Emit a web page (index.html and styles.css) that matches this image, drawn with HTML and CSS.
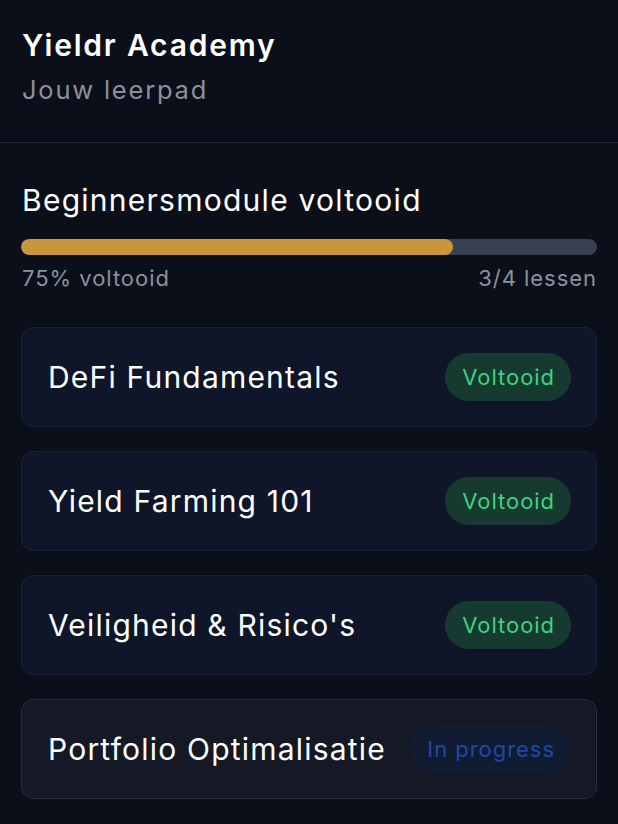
FILE: index.html
```html
<!DOCTYPE html>
<html lang="nl">
<head>
<meta charset="utf-8">
<title>Yieldr Academy</title>
<link rel="stylesheet" href="styles.css">
</head>
<body>
<header class="header">
  <h1 class="title">Yieldr Academy</h1>
  <p class="subtitle">Jouw leerpad</p>
</header>
<main class="main">
  <h2 class="module">Beginnersmodule voltooid</h2>
  <div class="bar"><div class="fill" style="width:75%"></div></div>
  <div class="labels"><span>75% voltooid</span><span>3/4 lessen</span></div>
  <ul class="lessons">
    <li class="card"><span class="name">DeFi Fundamentals</span><span class="badge done">Voltooid</span></li>
    <li class="card"><span class="name">Yield Farming 101</span><span class="badge done">Voltooid</span></li>
    <li class="card"><span class="name">Veiligheid &amp; Risico's</span><span class="badge done">Voltooid</span></li>
    <li class="card pending"><span class="name">Portfolio Optimalisatie</span><span class="badge progress">In progress</span></li>
  </ul>
</main>
</body>
</html>
```
FILE: styles.css
```css
* { box-sizing: border-box; }
html, body { margin: 0; padding: 0; }
body {
  background: #0b0f19;
  font-family: Inter, "Noto Sans", sans-serif;
  color: #ffffff;
  width: 618px;
  min-height: 824px;
  letter-spacing: 0.06em;
}
.header {
  padding: 25px 22px 36px;
  border-bottom: 1px solid #1f2633;
}
.title {
  margin: 0;
  font-size: 30px;
  line-height: 40px;
  font-weight: 600;
  letter-spacing: 0.06em;
}
.subtitle {
  margin: 9px 0 0;
  font-size: 25.5px;
  line-height: 32px;
  color: #8b919c;
  letter-spacing: 0.07em;
}
.main { padding: 37px 21px 0; }
.module {
  margin: 0;
  font-size: 30px;
  line-height: 40px;
  font-weight: 400;
  letter-spacing: 0.042em;
  padding-left: 1px;
}
.bar {
  margin-top: 19px;
  height: 16px;
  border-radius: 8px;
  background: #374151;
  overflow: hidden;
}
.fill { height: 100%; background: #c9963a; border-radius: 8px; }
.labels {
  margin-top: 9px;
  display: flex;
  justify-content: space-between;
  font-size: 22px;
  line-height: 28px;
  color: #8b919c;
  padding-left: 1px;
}
.lessons {
  list-style: none;
  margin: 35px 0 0;
  padding: 0;
  display: flex;
  flex-direction: column;
  gap: 24px;
}
.card {
  height: 100px;
  display: flex;
  align-items: center;
  justify-content: space-between;
  padding: 0 25px 0 26px;
  background: #0f1629;
  border: 1px solid #17213a;
  border-radius: 12px;
}
.card.pending { background: #141925; border-color: #252b37; }
.name { font-size: 30px; font-weight: 400; letter-spacing: 0.04em; }
.badge {
  height: 48px;
  display: flex;
  align-items: center;
  padding: 0 16px 0 17px;
  border-radius: 24px;
  font-size: 22px;
}
.badge.done { background: #163a2f; color: #3fd27f; }
.badge.progress { background: #111c33; color: #1f48a8; }
```
